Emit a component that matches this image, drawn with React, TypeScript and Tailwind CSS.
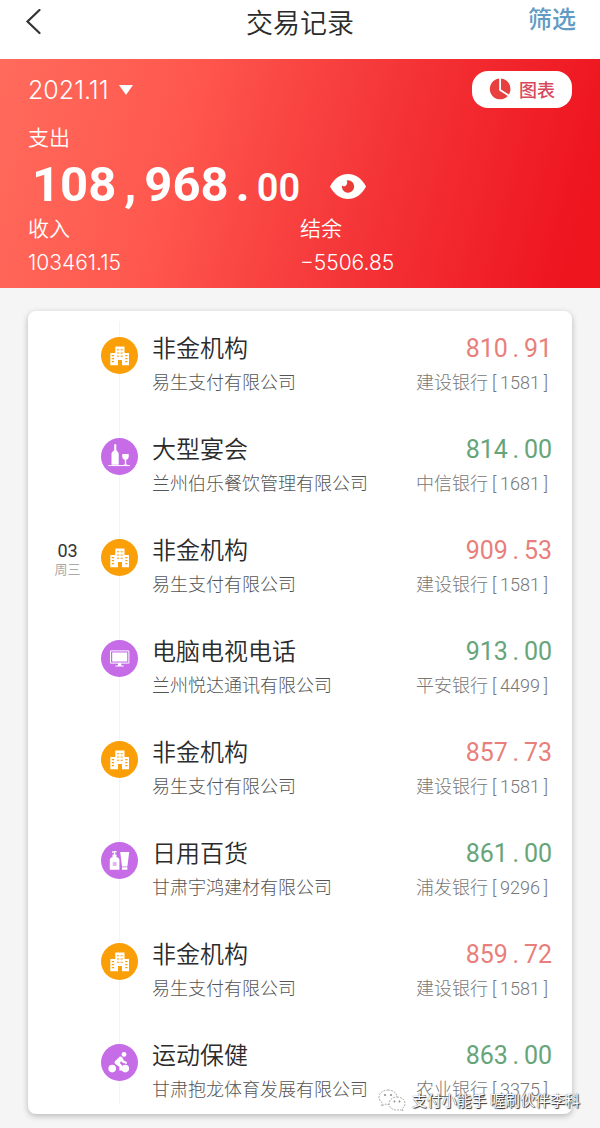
import type { ReactNode } from "react";

type Category = "institution" | "banquet" | "electronics" | "daily" | "sport";

type Transaction = {
  id: number;
  category: Category;
  company: string;
  amount: string;
  bank: string;
  card: string;
  income?: boolean;
  day?: string;
  weekday?: string;
};

const transactions: Transaction[] = [
  { id: 1, category: "institution", company: "易生支付有限公司", amount: "810.91", bank: "建设银行", card: "1581" },
  { id: 2, category: "banquet", company: "兰州伯乐餐饮管理有限公司", amount: "814.00", bank: "中信银行", card: "1681", income: true },
  { id: 3, category: "institution", company: "易生支付有限公司", amount: "909.53", bank: "建设银行", card: "1581", day: "03", weekday: "周三" },
  { id: 4, category: "electronics", company: "兰州悦达通讯有限公司", amount: "913.00", bank: "平安银行", card: "4499", income: true },
  { id: 5, category: "institution", company: "易生支付有限公司", amount: "857.73", bank: "建设银行", card: "1581" },
  { id: 6, category: "daily", company: "甘肃宇鸿建材有限公司", amount: "861.00", bank: "浦发银行", card: "9296", income: true },
  { id: 7, category: "institution", company: "易生支付有限公司", amount: "859.72", bank: "建设银行", card: "1581" },
  { id: 8, category: "sport", company: "甘肃抱龙体育发展有限公司", amount: "863.00", bank: "农业银行", card: "3375", income: true },
];

const categories: Record<Category, { label: string; color: string; icon: ReactNode }> = {
  institution: {
    label: "非金机构",
    color: "text-[#fa9f07]",
    icon: (
      <>
        <path fill="#fff" d="M14.3 9.5h9.2V16H28v12.2h-7V23h-4v5.200H9.300V16h5z" />
        <path
          stroke="currentColor"
          strokeWidth="1.1"
          d="M16 12.700h2.200m1.400 0h2.200M16 16h2.200m1.400 0h2.200M16 19.300h2.200m1.400 0h2.200M10.800 18.600h2.300M10.800 21.600h2.300M10.800 24.600h2.300M24.300 18.600h2.200M24.300 21.600h2.200M24.300 24.600h2.200"
        />
      </>
    ),
  },
  banquet: {
    label: "大型宴会",
    color: "text-[#c56ce6]",
    icon: (
      <>
        <path fill="#fff" d="M13.2 6.3h2.100v5.400c0 1.300 2.400 1.700 2.400 4.300v10.700h-7.200V16c0-2.600 2.700-3 2.700-4.300z" />
        <path fill="#fff" d="M21.300 16h6.400c.5 3.600-.4 5.400-2.500 5.800v4.200l1.800.7h-5l1.800-.7v-4.200c-2.100-.4-3-2.200-2.500-5.800z" />
        <path stroke="#fff" strokeWidth="1" d="M7.300 27.600H29" />
      </>
    ),
  },
  electronics: {
    label: "电脑电视电话",
    color: "text-[#c56ce6]",
    icon: (
      <>
        <path fill="#fff" d="M11.200 12.500h15v9h-15z" />
        <path stroke="#fff" strokeWidth="1" d="M9.500 10.900h18.400v12.200H9.500z" />
        <path fill="#fff" d="M17 23h3.200v2.200l2.700.5v.9h-8.600v-.9l2.700-.5z" />
      </>
    ),
  },
  daily: {
    label: "日用百货",
    color: "text-[#c56ce6]",
    icon: (
      <>
        <path fill="#fff" d="M11 9.500c1.500-.7 3.400-.7 4.600-.3v1.200h-1.400v2.200h1.300v2.600c2 .2 2.900 1.200 2.900 3v9.500H8.800v-9.500c0-1.800.9-2.800 2.700-3v-2.600h1.400v-2L11 11z" />
        <path stroke="currentColor" strokeWidth="1" d="M11.800 21h3.800M11.800 23h3.800" />
        <path fill="#fff" d="M19.200 10h9l-1.800 14.600H21zM21 25.200h5.400v2.500H21z" />
      </>
    ),
  },
  sport: {
    label: "运动保健",
    color: "text-[#c56ce6]",
    icon: (
      <>
        <circle cx="23" cy="10.400" r="2.400" fill="#fff" />
        <circle cx="11.200" cy="24.600" r="3.800" fill="#fff" />
        <circle cx="24.300" cy="24.600" r="3.800" fill="#fff" />
        <path
          fill="#fff"
          d="M18.600 12.700c1-.5 2.100-.1 2.600.9l1.700 3 2.900 1.300v2l-4.200-1.100-1.300-1.600-1.600 1.900 2.400 2.100v5.200h-2.700v-3.700l-4.200-2.800c-.9-.8-.9-1.900 0-2.800z"
        />
      </>
    ),
  },
};

function CategoryIcon({ category }: { category: Category }) {
  const { color, icon } = categories[category];
  return (
    <svg viewBox="0 0 37 37" fill="none" aria-hidden="true" className={`relative mt-2 size-[37px] ${color}`}>
      <circle cx="18.500" cy="18.500" r="18.500" fill="currentColor" />
      {icon}
    </svg>
  );
}

function BackIcon() {
  return (
    <svg viewBox="0 0 18 26" fill="none" aria-hidden="true" className="h-[26px] w-[18px]">
      <path stroke="#333" strokeWidth="2.200" strokeLinecap="round" d="M15.500 1 3.500 12.500 15.500 24" />
    </svg>
  );
}

function PieIcon() {
  return (
    <svg viewBox="0 0 22 22" aria-hidden="true" className="size-[22px]">
      <path
        fill="#e8403f"
        d="M10.200.6A10.400 10.400 0 1 0 18.800 18l-8.600-5.600zM12 .6v10.800l7.900 5.100A10.400 10.400 0 0 0 12 .6z"
      />
    </svg>
  );
}

function EyeIcon() {
  return (
    <svg viewBox="0 0 36 25" aria-hidden="true" className="h-[25px] w-9">
      <path fill="#fff" d="M0 12.500C4.500 4 11 0 18 0s13.500 4 18 12.500C31.500 21 25 25 18 25S4.500 21 0 12.500z" />
      <path fill="#e93c38" d="M18 6.300a6.200 6.200 0 1 1-6.100 5.200c1 .9 2.600 1 3.800.2 1.500-1 2-3.300 1-5.300z" />
    </svg>
  );
}

function Amount({ value, income }: { value: string; income?: boolean }) {
  const [whole, cents] = value.split(".");
  return (
    <p className={`flex font-[Roboto,sans-serif] text-[25px] leading-10 ${income ? "text-[#66a579]" : "text-[#e87f7b]"}`}>
      <span>{whole}</span>
      <span className="w-4 text-center">.</span>
      <span>{cents}</span>
    </p>
  );
}

function TransactionRow({ item }: { item: Transaction }) {
  return (
    <li className="grid grid-cols-[73px_37px_1fr_auto] items-start">
      <div className="pt-2.5 pl-1.5 text-center">
        {item.day && (
          <>
            <p className="font-[Roboto,sans-serif] text-lg leading-5 text-[#333]">{item.day}</p>
            <p className="text-[13px] leading-4 text-[#aaa]">{item.weekday}</p>
          </>
        )}
      </div>
      <CategoryIcon category={item.category} />
      <div className="pl-3.5 whitespace-nowrap">
        <h2 className="text-2xl leading-9 font-[350] text-[#2b2b2b]">{categories[item.category].label}</h2>
        <p className="mt-1 text-lg leading-6 font-light text-[#555]">{item.company}</p>
      </div>
      <div className="flex flex-col items-end whitespace-nowrap">
        <Amount value={item.amount} income={item.income} />
        <p className="mt-0.5 flex font-[Roboto,'Noto_Sans_CJK_SC',sans-serif] text-lg leading-6 font-light text-[#777]">
          <span>{item.bank}</span>
          <span className="w-3 text-center">[</span>
          <span>{item.card}</span>
          <span className="w-3 text-center">]</span>
        </p>
      </div>
    </li>
  );
}

function Watermark() {
  return (
    <div className="absolute -right-2 bottom-0.5 flex items-center gap-1.5 whitespace-nowrap">
      <svg viewBox="0 0 28 24" aria-hidden="true" className="h-6 w-7" fill="#fff" stroke="#999" strokeWidth=".8" strokeDasharray="2 1">
        <path d="M10 2c5 0 9 3 9 7.300s-4 7.300-9 7.300l-3-.5-3.500 2 .8-3.300C2.200 13.500 1 11.500 1 9.300 1 5 5 2 10 2z" />
        <path d="M19 9c4.500 0 8 2.800 8 6.500 0 2-1 3.700-2.700 5l.6 2.500-2.800-1.300-3.100.4c-4.500 0-8-2.900-8-6.600S14.500 9 19 9z" />
        <g fill="#888" stroke="none">
          <circle cx="7" cy="7" r="1" />
          <circle cx="13" cy="7" r="1" />
          <circle cx="16.500" cy="13.500" r=".9" />
          <circle cx="21.500" cy="13.500" r=".9" />
        </g>
      </svg>
      <span className="text-[15px] leading-6 text-white [text-shadow:1px_1px_1px_#222,0_0_1px_#555]">
        支付小能手 喔刷伙伴李科
      </span>
    </div>
  );
}

export default function App() {
  return (
    <div className="min-h-screen bg-[#f5f5f5] font-['Noto_Sans_CJK_SC',sans-serif]">
      <header className="grid h-[59px] grid-cols-3 bg-white px-6 pb-4">
        <button type="button" aria-label="返回" className="justify-self-start">
          <BackIcon />
        </button>
        <h1 className="self-center justify-self-center text-[27px] leading-10 font-[350] whitespace-nowrap text-[#2b2b2b]">
          交易记录
        </h1>
        <button type="button" className="self-start justify-self-end text-2xl leading-9 font-medium text-[#629bc3]">
          筛选
        </button>
      </header>

      <section className="bg-[linear-gradient(105deg,#ff6b5c_0%,#ff594f_28%,#f43437_62%,#ee151f_94%)] px-7 pt-3 pb-[13px] text-white">
        <div className="flex items-center justify-between">
          <button type="button" className="flex items-center gap-2.5 font-[Inter,sans-serif] text-[25px] leading-7 font-light">
            2021.11
            <svg viewBox="0 0 14 10" aria-hidden="true" className="h-2.5 w-3.5">
              <path fill="#fff" d="M0 0h14L7 10z" />
            </svg>
          </button>
          <button type="button" className="flex h-[37px] w-[100px] items-center justify-center gap-2 rounded-2xl bg-white pb-0.5 text-lg font-medium text-[#d8485c]">
            <PieIcon />
            图表
          </button>
        </div>

        <p className="mt-4 text-[21px] leading-6 font-[350]">支出</p>
        <div className="mt-3 flex items-center gap-[30px]">
          <p className="flex items-baseline pl-1 font-[Roboto,sans-serif] text-[49px] leading-[50px] font-bold">
            <span>108</span>
            <span className="w-7 text-center">,</span>
            <span>968</span>
            <span className="w-7 text-center">.</span>
            <span className="text-[38px] font-semibold">00</span>
          </p>
          <button type="button" aria-label="隐藏金额">
            <EyeIcon />
          </button>
        </div>

        <dl className="mt-0.5 grid grid-cols-2">
          <div>
            <dt className="text-[21px] leading-6 font-[350]">收入</dt>
            <dd className="mt-3 font-[Inter,sans-serif] text-[21px] leading-6 font-[350]">103461.15</dd>
          </div>
          <div>
            <dt className="text-[21px] leading-6 font-[350]">结余</dt>
            <dd className="mt-3 font-[Inter,sans-serif] text-[21px] leading-6 font-[350]">−5506.85</dd>
          </div>
        </dl>
      </section>

      <main className="px-7 pt-[23px] pb-3.5">
        <div className="relative rounded-lg bg-white pt-[18px] pr-5 pb-3 shadow-[0_2px_6px_rgba(0,0,0,0.25)]">
          <div className="absolute inset-y-2.5 left-[91px] w-px bg-[#f6f2f5]" />
          <ol className="flex flex-col gap-[35px]">
            {transactions.map((item) => (
              <TransactionRow key={item.id} item={item} />
            ))}
          </ol>
          <Watermark />
        </div>
      </main>
    </div>
  );
}
